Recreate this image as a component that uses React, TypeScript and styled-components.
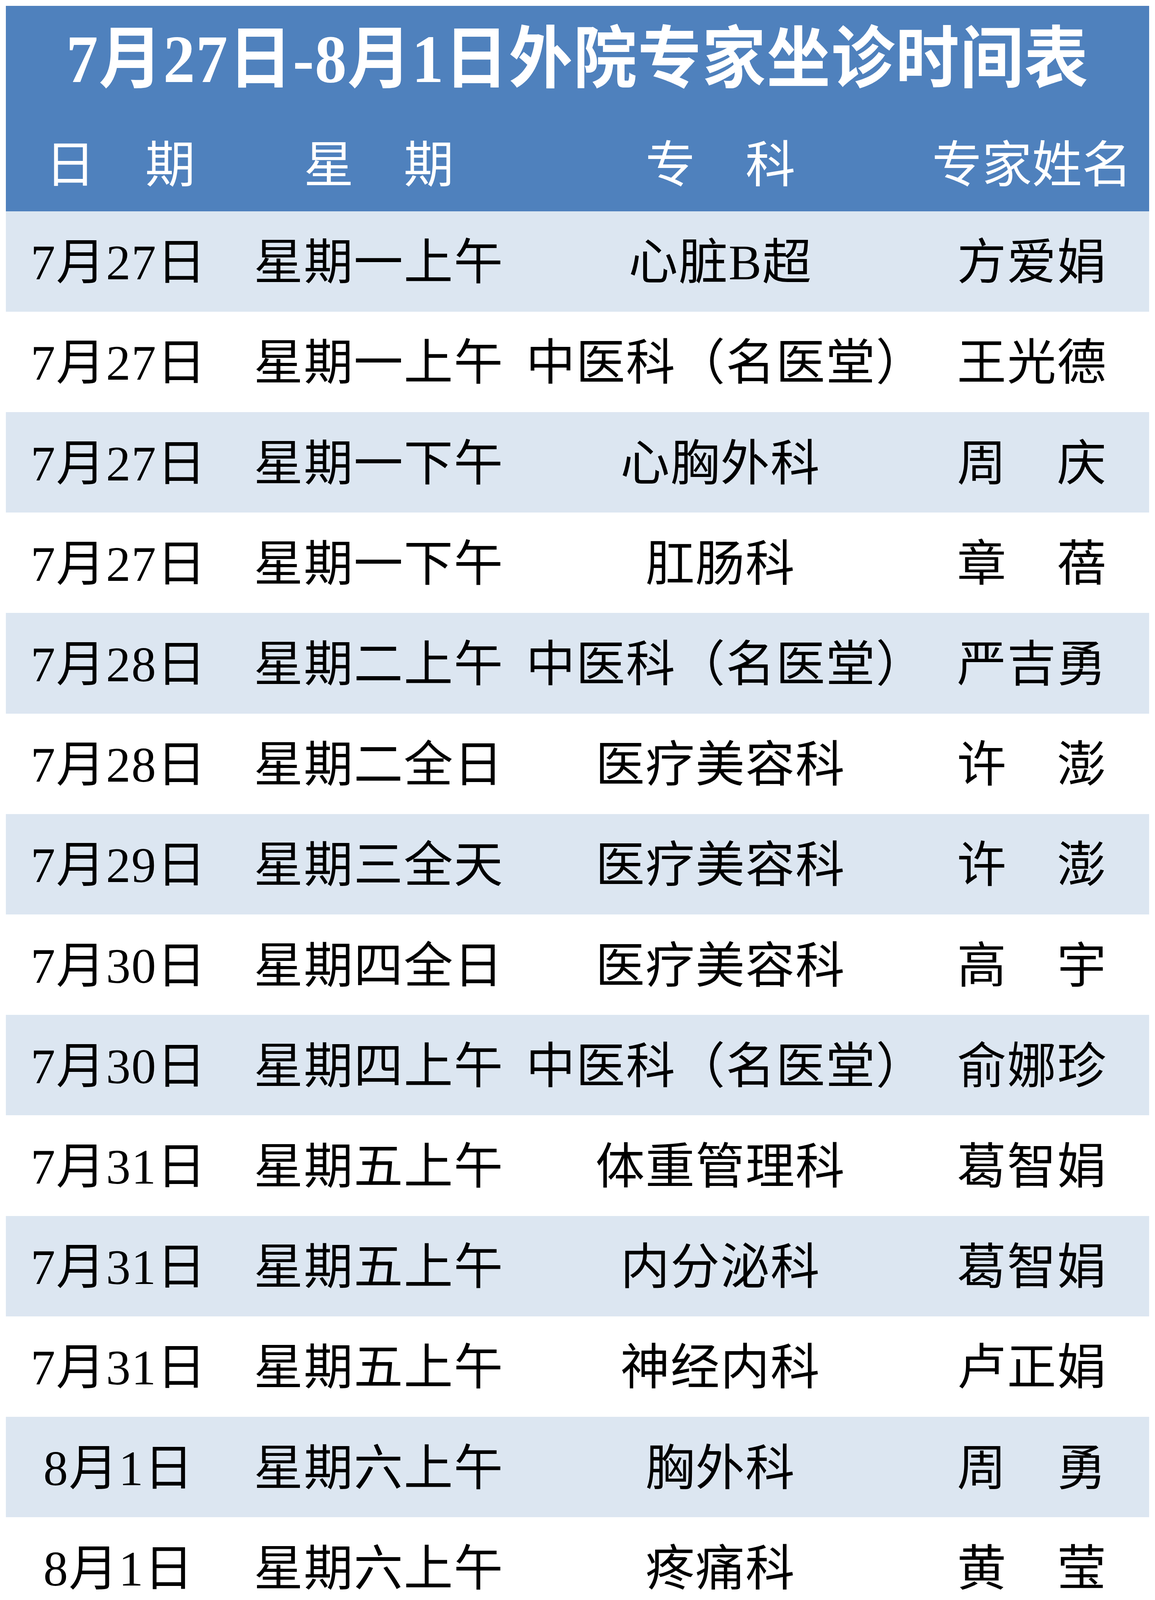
import React from 'react';
import styled, {createGlobalStyle} from 'styled-components';

// the sheet was drawn 4236px tall; vertical sizes follow the window height
const vh = (px: number) => `${(px / 4236) * 100}vh`;

const SCHEDULE = [
  {date: '7月27日', week: '星期一上午', dept: '心脏B超', doctor: '方爱娟'},
  {date: '7月27日', week: '星期一上午', dept: '中医科（名医堂）', doctor: '王光德'},
  {date: '7月27日', week: '星期一下午', dept: '心胸外科', doctor: '周　庆'},
  {date: '7月27日', week: '星期一下午', dept: '肛肠科', doctor: '章　蓓'},
  {date: '7月28日', week: '星期二上午', dept: '中医科（名医堂）', doctor: '严吉勇'},
  {date: '7月28日', week: '星期二全日', dept: '医疗美容科', doctor: '许　澎'},
  {date: '7月29日', week: '星期三全天', dept: '医疗美容科', doctor: '许　澎'},
  {date: '7月30日', week: '星期四全日', dept: '医疗美容科', doctor: '高　宇'},
  {date: '7月30日', week: '星期四上午', dept: '中医科（名医堂）', doctor: '俞娜珍'},
  {date: '7月31日', week: '星期五上午', dept: '体重管理科', doctor: '葛智娟'},
  {date: '7月31日', week: '星期五上午', dept: '内分泌科', doctor: '葛智娟'},
  {date: '7月31日', week: '星期五上午', dept: '神经内科', doctor: '卢正娟'},
  {date: '8月1日', week: '星期六上午', dept: '胸外科', doctor: '周　勇'},
  {date: '8月1日', week: '星期六上午', dept: '疼痛科', doctor: '黄　莹'},
];

const COLUMNS = ['日　期', '星　期', '专　科', '专家姓名'];

const GlobalStyle = createGlobalStyle`
  html, body {
    margin: 0;
    padding: 0;
    background: #ffffff;
    overflow: hidden;
  }
  body {
    font-family: "Liberation Serif", "Noto Sans CJK SC", serif;
  }
`;

const Page = styled.div`
  height: 100vh;
  overflow: hidden;
  padding: ${vh(15)} 15px 0;
  box-sizing: border-box;
  background: #ffffff;
`;

const Table = styled.div`
  width: 2928px;
  display: flex;
  flex-direction: column;
`;

const Header = styled.div`
  background: #4f81bd;
  height: ${vh(544)};
  display: flex;
  flex-direction: column;
`;

const Title = styled.h1`
  margin: 0;
  height: ${vh(286)};
  display: flex;
  align-items: center;
  justify-content: center;
  color: #ffffff;
  font-size: 163px;
  line-height: 1;
  font-weight: 700;
  letter-spacing: 2px;
  white-space: nowrap;
`;

const TitleText = styled.span`
  display: inline-block;
  transform: scaleY(1.06);
`;

const Grid = styled.div<{$striped?: boolean}>`
  display: grid;
  grid-template-columns: 578px 754px 996px 600px;
  background: ${(p) => (p.$striped ? '#dce6f1' : '#ffffff')};
`;

const HeadRow = styled(Grid)`
  flex: 1;
  align-items: center;
  padding-top: ${vh(18)};
  background: transparent;
`;

const HeadCell = styled.div<{$shift?: number}>`
  color: #ffffff;
  font-size: 128px;
  line-height: 1;
  text-align: center;
  white-space: nowrap;
  padding-left: ${(p) => p.$shift || 0}px;
`;

// the last row is cut by the bottom of the sheet, so it keeps only what is left
const Row = styled(Grid)<{$last?: boolean}>`
  flex-shrink: 0;
  align-items: start;
  height: ${(p) => (p.$last ? vh(219) : vh(266))};
  padding-top: ${vh(72)};
  box-sizing: border-box;
`;

const Cell = styled.div`
  color: #000000;
  font-size: 126px;
  line-height: 1;
  letter-spacing: 2px;
  text-align: center;
  white-space: nowrap;
`;

const App: React.FC = () => {
  return (
    <>
      <GlobalStyle />
      <Page>
        <Table>
          <Header>
            <Title>
              <TitleText>7月27日-8月1日外院专家坐诊时间表</TitleText>
            </Title>
            <HeadRow>
              {COLUMNS.map((c, i) => (
                <HeadCell key={c} $shift={i === 0 ? 8 : 0}>
                  {c}
                </HeadCell>
              ))}
            </HeadRow>
          </Header>
          {SCHEDULE.map((s, i) => (
            <Row
              key={i}
              $striped={i % 2 === 0}
              $last={i === SCHEDULE.length - 1}
            >
              <Cell>{s.date}</Cell>
              <Cell>{s.week}</Cell>
              <Cell>{s.dept}</Cell>
              <Cell>{s.doctor}</Cell>
            </Row>
          ))}
        </Table>
      </Page>
    </>
  );
};

export default App;
